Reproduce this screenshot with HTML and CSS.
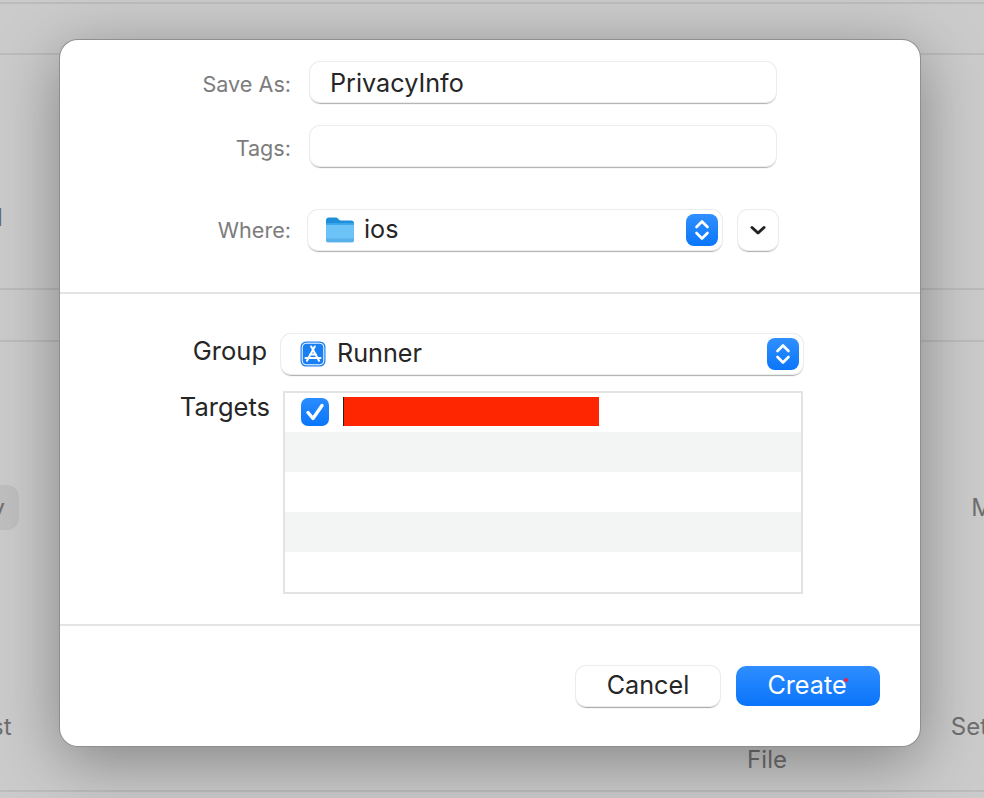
FILE: index.html
```html
<!DOCTYPE html>
<html lang="en">
<head>
<meta charset="utf-8">
<title>Save As</title>
<link rel="stylesheet" href="styles.css">
</head>
<body>
<div class="backdrop">
  <div class="band band-a"></div>
  <div class="band band-b"></div>
  <div class="band band-c"><span class="frag-l">l</span></div>
  <div class="band band-d"></div>
  <div class="band band-e">
    <div class="bg-line bg-line-1"><span class="pill">y</span><span class="frag-m">M</span></div>
    <div class="bg-line bg-line-2"><span class="frag-st">st</span><span class="frag-set">Set</span></div>
    <div class="bg-line bg-line-3"><span class="frag-file">File</span></div>
  </div>
</div>

<main class="dialog">
  <section class="sec sec-top">
    <div class="row row-save">
      <label class="lbl">Save As:</label>
      <div class="field">PrivacyInfo</div>
    </div>
    <div class="row row-tags">
      <label class="lbl">Tags:</label>
      <div class="field"></div>
    </div>
    <div class="row row-where">
      <label class="lbl lbl-where">Where:</label>
      <div class="popup popup-where">
        <svg class="folder" width="30" height="28" viewBox="0 0 30 28">
          <path d="M1 5.500C1 3.500 2 2.500 4 2.500h6.500c1.200 0 1.800.4 2.600 1.200l1 1.100c.5.500 1 .7 1.800.7H26c2 0 3 1 3 3v2H1z" fill="#1f8fdb"/>
          <path d="M1 8.500h28V25c0 1.400-.9 2.300-2.300 2.300H3.300C1.900 27.300 1 26.400 1 25z" fill="#6cc3f8"/>
          <path d="M1 8.500h28v1.200H1z" fill="#2f9ee6"/>
          <path d="M1 23.500h28V25c0 1.400-.9 2.300-2.300 2.300H3.300C1.900 27.300 1 26.400 1 25z" fill="#58b1ea"/>
        </svg>
        <span class="popup-text">ios</span>
        <span class="stepper">
          <svg width="16" height="24" viewBox="0 0 16 24"><path d="M2.500 9 8 3.500 13.500 9M2.500 15 8 20.500 13.500 15" fill="none" stroke="#fff" stroke-width="2.600" stroke-linecap="round" stroke-linejoin="round"/></svg>
        </span>
      </div>
      <div class="expand">
        <svg width="16" height="11" viewBox="0 0 16 11"><path d="M2 2.500 8 8l6-5.500" fill="none" stroke="#222" stroke-width="3" stroke-linecap="round" stroke-linejoin="round"/></svg>
      </div>
    </div>
  </section>

  <section class="sec sec-mid">
    <div class="row row-group">
      <label class="lbl-dark">Group</label>
      <div class="popup popup-group">
        <svg class="appicon" width="26" height="26" viewBox="0 0 26 26">
          <rect x="0.500" y="0.500" width="25" height="25" rx="5.500" fill="#1a7ff0"/>
          <rect x="2.200" y="2.200" width="21.600" height="21.600" rx="4" fill="none" stroke="#fff" stroke-width="1"/>
          <path d="M14.800 5.500 7 19.800M11.200 5.500 19 19.800M5.500 17h15M10 13.500h6" fill="none" stroke="#fff" stroke-width="2" stroke-linecap="round"/>
        </svg>
        <span class="popup-text">Runner</span>
        <span class="stepper">
          <svg width="16" height="24" viewBox="0 0 16 24"><path d="M2.500 9 8 3.500 13.500 9M2.500 15 8 20.500 13.500 15" fill="none" stroke="#fff" stroke-width="2.600" stroke-linecap="round" stroke-linejoin="round"/></svg>
        </span>
      </div>
    </div>
    <div class="row row-targets">
      <label class="lbl-dark lbl-targets">Targets</label>
      <div class="table">
        <div class="trow first">
          <span class="check">
            <svg width="22" height="20" viewBox="0 0 22 20"><path d="M4 10.500 9 16.500 18 3.500" fill="none" stroke="#fff" stroke-width="3.400" stroke-linecap="round" stroke-linejoin="round"/></svg>
          </span>
          <span class="redact"></span>
        </div>
        <div class="trow alt"></div>
        <div class="trow"></div>
        <div class="trow alt"></div>
        <div class="trow"></div>
      </div>
    </div>
  </section>

  <section class="sec sec-bot">
    <button class="btn btn-cancel">Cancel</button>
    <button class="btn btn-create">Create<span class="dot"></span></button>
  </section>
</main>
</body>
</html>
```
FILE: styles.css
```css
* { box-sizing: border-box; }
html, body { margin: 0; padding: 0; }
body {
  width: 984px;
  height: 798px;
  overflow: hidden;
  position: relative;
  background: #cbcbcb;
  font-family: Inter, "Liberation Sans", sans-serif;
}

.backdrop { display: flex; flex-direction: column; height: 798px; color: #6f6f6f; font-size: 24px; }
.band { border-bottom: 2px solid #bcbcbc; flex: none; }
.band-a { height: 4px; }
.band-b { height: 51px; }
.band-c { height: 235px; padding-top: 151px; }
.band-d { height: 52px; }
.band-e { height: 450px; padding-top: 143px; display: flex; flex-direction: column; }
.frag-l { margin-left: -3px; display: block; line-height: 24px; color: #666; }
.bg-line { display: flex; justify-content: space-between; white-space: nowrap; }
.bg-line-1 { height: 45px; align-items: center; }
.pill { width: 40px; height: 45px; margin-left: -21px; background: #bfbfbf; border-radius: 12px; display: flex; align-items: center; justify-content: flex-end; padding-right: 14px; }
.frag-m { margin-right: -9px; }
.bg-line-2 { margin-top: 181px; height: 30px; align-items: center; }
.frag-st { margin-left: -9px; }
.frag-set { margin-right: -4px; }
.bg-line-3 { margin-top: 3px; padding-left: 747px; height: 30px; align-items: center; }
.frag-file { letter-spacing: .1px; }

.dialog {
  position: absolute;
  left: 60px;
  top: 40px;
  width: 860px;
  height: 706px;
  background: #fff;
  border-radius: 18px;
  box-shadow: 0 0 0 1px #8f8f8f, 0 14px 64px rgba(0,0,0,.36);
  display: flex;
  flex-direction: column;
  color: #262626;
}
.sec { flex: none; }
.sec-top { height: 254px; border-bottom: 2px solid #e4e4e4; padding-top: 22px; }
.sec-mid { height: 332px; border-bottom: 2px solid #e4e4e4; padding-top: 40px; }
.sec-bot { padding: 40px 40px 0 0; display: flex; justify-content: flex-end; gap: 16px; }

.row { display: flex; align-items: center; }
.lbl { width: 231px; text-align: right; color: #7c7c7c; font-size: 21.600px; padding-top: 4px; }
.lbl-where { padding-top: 0; }
.lbl-dark { text-align: right; font-size: 25.500px; color: #262626; width: 207px; padding-bottom: 8px; }
.field {
  width: 466px;
  height: 40px;
  margin-left: 19px;
  border-radius: 10px;
  background: #fff;
  box-shadow: 0 0 0 1px #ececec, 0 1.500px 1px 0 #aeaeae;
  padding-left: 20px;
  font-size: 25.200px;
  line-height: 42px;
}
.row-tags { margin-top: 24px; }
.row-where { margin-top: 44px; }

.popup {
  height: 40px;
  border-radius: 10px;
  background: #fff;
  box-shadow: 0 0 0 1px #ececec, 0 1.500px 1px 0 #aeaeae;
  display: flex;
  align-items: center;
  font-size: 25.200px;
}
.popup-where { width: 414px; margin-left: 17px; padding-left: 17px; line-height: 36px; }
.folder { flex: none; margin: -3px 9px 0 0; }
.popup-text { flex: 1; }
.popup-where .popup-text, .popup-group .popup-text { padding-bottom: 2px; }
.stepper {
  flex: none;
  width: 32px;
  height: 32px;
  margin-right: 4px;
  border-radius: 8px;
  background: linear-gradient(#2f8fff, #0a76fb);
  display: flex;
  align-items: center;
  justify-content: center;
}
.expand {
  width: 40px;
  height: 40px;
  margin-left: 16px;
  border-radius: 10px;
  background: #fff;
  box-shadow: 0 0 0 1px #ececec, 0 1.500px 1px 0 #aeaeae;
  display: flex;
  align-items: center;
  justify-content: center;
}

.row-group .lbl-dark { margin-right: 14px; }
.popup-group { width: 522px; padding-left: 19px; line-height: 36px; }
.appicon { flex: none; margin-right: 11px; }

.row-targets { align-items: flex-start; margin-top: 17px; }
.lbl-targets { width: 210px; line-height: 34px; padding-bottom: 0; margin-top: -1px; }
.table { margin-left: 13px; width: 520px; height: 203px; border: 2px solid #e2e3e3; background: #fff; }
.trow { height: 40px; }
.trow.first { height: 39px; display: flex; align-items: center; padding: 0 0 2px 16px; }
.alt { background: #f3f4f4; }
.check {
  width: 28px;
  height: 28px;
  border-radius: 7px;
  background: linear-gradient(#2a8cff, #0a76fb);
  display: flex;
  align-items: center;
  justify-content: center;
}
.redact { width: 256px; height: 29px; margin-left: 14px; background: #fe2600; border-left: 1px solid #222; }

.btn {
  width: 144px;
  height: 40px;
  border: 0;
  border-radius: 10px;
  font-family: inherit;
  font-size: 25.200px;
  padding: 0 0 2px;
}
.btn-cancel { background: #fff; color: #262626; box-shadow: 0 0 0 1px #ececec, 0 1.500px 1px 0 #a8a8a8; }
.btn-create { background: linear-gradient(#2f8eff, #0a74fb); color: #fff; position: relative; padding-right: 2px; }
.dot { position: absolute; left: 108px; top: 12px; width: 4px; height: 4px; border-radius: 50%; background: #f5203a; }
```
